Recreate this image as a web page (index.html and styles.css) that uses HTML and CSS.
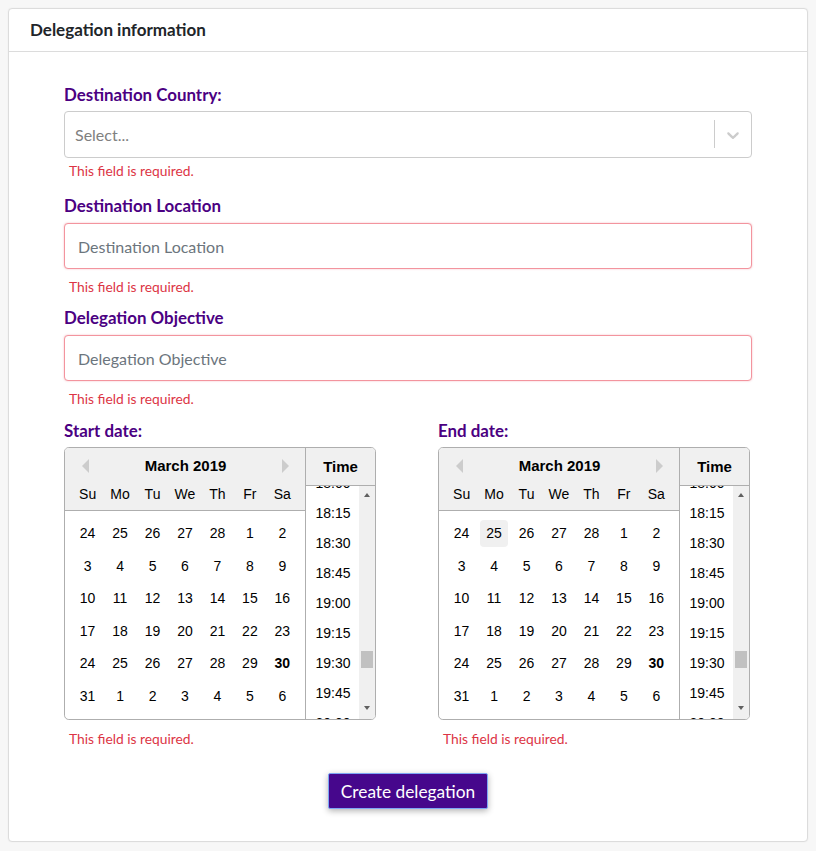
FILE: index.html
```html
<!DOCTYPE html>
<html lang="en">
<head>
<meta charset="utf-8">
<title>Delegation information</title>
<link rel="stylesheet" href="styles.css">
</head>
<body>
<div class="card">
  <div class="card-header">Delegation information</div>
  <div class="card-body">
    <form class="form">
      <label class="label">Destination Country:</label>
      <div class="select">
        <span class="select-placeholder">Select...</span>
        <span class="select-sep"></span>
        <span class="select-indicator">
          <svg width="20" height="20" viewBox="0 0 20 20"><path fill="#cccccc" d="M4.516 7.548c0.436-0.446 1.043-0.481 1.576 0l3.908 3.747 3.908-3.747c0.533-0.481 1.141-0.446 1.574 0 0.436 0.445 0.408 1.197 0 1.615-0.406 0.418-4.695 4.502-4.695 4.502-0.217 0.223-0.502 0.335-0.787 0.335s-0.57-0.112-0.789-0.335c0 0-4.287-4.084-4.695-4.502s-0.436-1.170 0-1.615z"/></svg>
        </span>
      </div>
      <div class="error error-select">This field is required.</div>

      <label class="label label-gap">Destination Location</label>
      <input class="input invalid" type="text" placeholder="Destination Location">
      <div class="error error-input">This field is required.</div>

      <label class="label label-gap2">Delegation Objective</label>
      <input class="input invalid" type="text" placeholder="Delegation Objective">
      <div class="error error-input">This field is required.</div>

      <div class="dates">
        <div class="date-col">
          <label class="label">Start date:</label>
          <div class="datepicker">
            <div class="month">
              <div class="month-header">
                <div class="title-row"><span class="nav nav-prev"></span><span class="month-title">March 2019</span><span class="nav nav-next"></span></div>
                <div class="day-names"><span>Su</span><span>Mo</span><span>Tu</span><span>We</span><span>Th</span><span>Fr</span><span>Sa</span></div>
              </div>
              <div class="weeks">
                <div class="week"><span class="day">24</span><span class="day">25</span><span class="day">26</span><span class="day">27</span><span class="day">28</span><span class="day">1</span><span class="day">2</span></div>
                <div class="week"><span class="day">3</span><span class="day">4</span><span class="day">5</span><span class="day">6</span><span class="day">7</span><span class="day">8</span><span class="day">9</span></div>
                <div class="week"><span class="day">10</span><span class="day">11</span><span class="day">12</span><span class="day">13</span><span class="day">14</span><span class="day">15</span><span class="day">16</span></div>
                <div class="week"><span class="day">17</span><span class="day">18</span><span class="day">19</span><span class="day">20</span><span class="day">21</span><span class="day">22</span><span class="day">23</span></div>
                <div class="week"><span class="day">24</span><span class="day">25</span><span class="day">26</span><span class="day">27</span><span class="day">28</span><span class="day">29</span><span class="day today">30</span></div>
                <div class="week"><span class="day">31</span><span class="day">1</span><span class="day">2</span><span class="day">3</span><span class="day">4</span><span class="day">5</span><span class="day">6</span></div>
              </div>
            </div>
            <div class="time">
              <div class="time-header">Time</div>
              <div class="time-body">
                <div class="time-list">
                  <div class="time-item first">18:00</div>
                  <div class="time-item">18:15</div>
                  <div class="time-item">18:30</div>
                  <div class="time-item">18:45</div>
                  <div class="time-item">19:00</div>
                  <div class="time-item">19:15</div>
                  <div class="time-item">19:30</div>
                  <div class="time-item">19:45</div>
                  <div class="time-item">20:00</div>
                </div>
                <div class="scrollbar"><span class="sb-up"></span><span class="sb-thumb"></span><span class="sb-down"></span></div>
              </div>
            </div>
          </div>
          <div class="error error-date">This field is required.</div>
        </div>

        <div class="date-col">
          <label class="label">End date:</label>
          <div class="datepicker">
            <div class="month">
              <div class="month-header">
                <div class="title-row"><span class="nav nav-prev"></span><span class="month-title">March 2019</span><span class="nav nav-next"></span></div>
                <div class="day-names"><span>Su</span><span>Mo</span><span>Tu</span><span>We</span><span>Th</span><span>Fr</span><span>Sa</span></div>
              </div>
              <div class="weeks">
                <div class="week"><span class="day">24</span><span class="day hovered">25</span><span class="day">26</span><span class="day">27</span><span class="day">28</span><span class="day">1</span><span class="day">2</span></div>
                <div class="week"><span class="day">3</span><span class="day">4</span><span class="day">5</span><span class="day">6</span><span class="day">7</span><span class="day">8</span><span class="day">9</span></div>
                <div class="week"><span class="day">10</span><span class="day">11</span><span class="day">12</span><span class="day">13</span><span class="day">14</span><span class="day">15</span><span class="day">16</span></div>
                <div class="week"><span class="day">17</span><span class="day">18</span><span class="day">19</span><span class="day">20</span><span class="day">21</span><span class="day">22</span><span class="day">23</span></div>
                <div class="week"><span class="day">24</span><span class="day">25</span><span class="day">26</span><span class="day">27</span><span class="day">28</span><span class="day">29</span><span class="day today">30</span></div>
                <div class="week"><span class="day">31</span><span class="day">1</span><span class="day">2</span><span class="day">3</span><span class="day">4</span><span class="day">5</span><span class="day">6</span></div>
              </div>
            </div>
            <div class="time">
              <div class="time-header">Time</div>
              <div class="time-body">
                <div class="time-list">
                  <div class="time-item first">18:00</div>
                  <div class="time-item">18:15</div>
                  <div class="time-item">18:30</div>
                  <div class="time-item">18:45</div>
                  <div class="time-item">19:00</div>
                  <div class="time-item">19:15</div>
                  <div class="time-item">19:30</div>
                  <div class="time-item">19:45</div>
                  <div class="time-item">20:00</div>
                </div>
                <div class="scrollbar"><span class="sb-up"></span><span class="sb-thumb"></span><span class="sb-down"></span></div>
              </div>
            </div>
          </div>
          <div class="error error-date">This field is required.</div>
        </div>
      </div>

      <div class="actions">
        <button type="button" class="btn">Create delegation</button>
      </div>
    </form>
  </div>
</div>
</body>
</html>
```

FILE: styles.css
```css
* { box-sizing: border-box; }

html, body {
  margin: 0;
  padding: 0;
}

body {
  background: #f7f7f7;
  padding: 8px;
  font-family: Lato, "Open Sans", sans-serif;
  color: #212529;
}

.card {
  background: #ffffff;
  border: 1px solid #dcdcdc;
  border-radius: 4px;
  box-shadow: 0 0 2px rgba(0, 0, 0, 0.06);
  height: 834px;
  display: flex;
  flex-direction: column;
}

.card-header {
  padding: 9px 21px;
  line-height: 24px;
  font-size: 17px;
  font-weight: 700;
  color: #212529;
  border-bottom: 1px solid #dcdcdc;
}

.card-body {
  padding: 33px 55px 32px;
}

.form {
  display: flex;
  flex-direction: column;
}

.label {
  display: block;
  font-size: 16.9px;
  line-height: 20px;
  font-weight: 700;
  color: #4b0082;
}

.label-gap { margin-top: 16px; }
.label-gap2 { margin-top: 12px; }

.select {
  margin-top: 6px;
  height: 47px;
  border: 1px solid #cccccc;
  border-radius: 4px;
  display: flex;
  align-items: center;
  background: #fff;
}

.select-placeholder {
  flex: 1;
  padding-left: 10px;
  font-size: 16px;
  color: #808080;
}

.select-sep {
  align-self: stretch;
  width: 1px;
  margin: 8px 0 9px;
  background: #cccccc;
}

.select-indicator {
  display: flex;
  padding: 0 8px;
}

.input {
  margin-top: 7px;
  height: 46px;
  width: 100%;
  border: 1px solid #cccccc;
  border-radius: 4px;
  padding: 0 13px;
  font-family: inherit;
  font-size: 16px;
  color: #495057;
  outline: none;
}

.input::placeholder { color: #6c757d; }

.input.invalid {
  border-color: #f3949e;
  box-shadow: 0 0 2px rgba(220, 53, 69, 0.35);
}

.error {
  padding-left: 5px;
  font-size: 13.8px;
  line-height: 18px;
  color: #dc3545;
}

.error-select { margin-top: 4px; }
.error-input { margin-top: 9px; }
.error-date { margin-top: 10px; }

.dates {
  margin-top: 13px;
  display: grid;
  grid-template-columns: 374px 1fr;
}

.datepicker {
  margin-top: 6px;
  display: flex;
  width: 312px;
  border: 1px solid #aeaeae;
  border-radius: 4.8px;
  background: #fff;
  font-family: "Liberation Sans", Arial, sans-serif;
  font-size: 14px;
  color: #000;
  overflow: hidden;
}

.month {
  width: 240px;
  flex: none;
}

.month-header {
  background: #f0f0f0;
  border-bottom: 1px solid #aeaeae;
  padding-top: 8px;
  padding-bottom: 2px;
}

.title-row {
  display: flex;
  align-items: center;
  justify-content: space-between;
  padding: 0 16px 0 17px;
  height: 20px;
}

.month-title {
  font-size: 15px;
  font-weight: 700;
  line-height: 20px;
}

.nav {
  width: 0;
  height: 0;
  border-top: 7px solid transparent;
  border-bottom: 7px solid transparent;
}

.nav-prev { border-right: 7px solid #cccccc; }
.nav-next { border-left: 7px solid #cccccc; }

.day-names {
  display: flex;
  margin: 5px 6.4px 0;
}

.day-names span,
.day {
  width: 27.2px;
  margin: 0 2.656px;
  line-height: 27.2px;
  text-align: center;
}

.weeks {
  padding: 6.4px;
}

.week {
  display: flex;
}

.day {
  margin: 2.656px;
  border-radius: 4px;
}

.day.today { font-weight: 700; }
.day.hovered { background: #f0f0f0; }

.time {
  flex: 1;
  border-left: 1px solid #aeaeae;
  display: flex;
  flex-direction: column;
}

.time-header {
  height: 38px;
  background: #f0f0f0;
  border-bottom: 1px solid #aeaeae;
  display: flex;
  align-items: center;
  justify-content: center;
  font-size: 15px;
  font-weight: 700;
}

.time-body {
  height: 233px;
  display: flex;
  overflow: hidden;
}

.time-list {
  flex: 1;
  overflow: hidden;
  padding-left: 1px;
}

.time-item {
  height: 30px;
  line-height: 30px;
  text-align: center;
}

.time-item.first { margin-top: -18px; }

.scrollbar {
  width: 16px;
  flex: none;
  background: #f0f0f0;
  display: flex;
  flex-direction: column;
  align-items: center;
}

.sb-up,
.sb-down {
  width: 0;
  height: 0;
  border-left: 3.5px solid transparent;
  border-right: 3.5px solid transparent;
}

.sb-up {
  margin-top: 7px;
  border-bottom: 4px solid #606060;
}

.sb-thumb {
  margin-top: 154px;
  width: 12px;
  height: 17px;
  background: #c1c1c1;
}

.sb-down {
  margin-top: auto;
  margin-bottom: 9px;
  border-top: 4px solid #606060;
}

.actions {
  margin-top: 25px;
  display: flex;
  justify-content: center;
}

.btn {
  height: 36px;
  padding: 0 12px;
  border: 1px solid #7ea6f5;
  border-radius: 2px;
  background: #46078c;
  color: #ffffff;
  font-family: inherit;
  font-size: 17.3px;
  box-shadow: 0 2px 6px rgba(0, 0, 0, 0.3);
}
```
